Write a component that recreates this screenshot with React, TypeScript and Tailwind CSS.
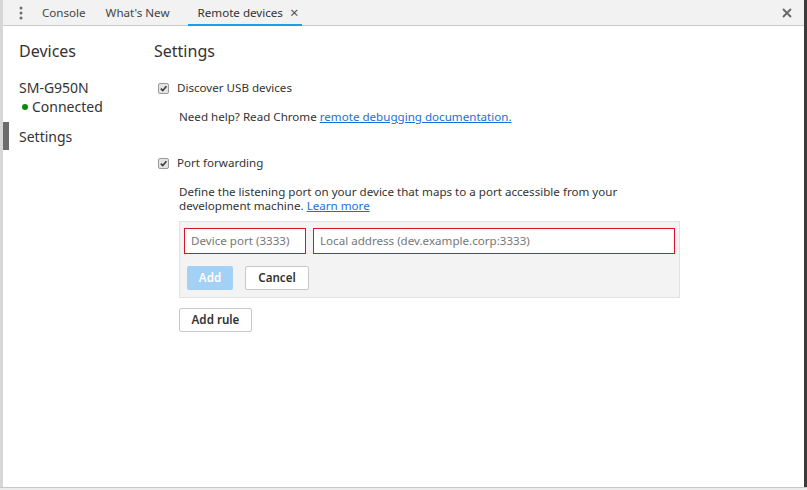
import React from 'react';

const Check: React.FC = () => (
  <span className="flex h-[11px] w-[11px] items-center justify-center rounded-[2px] border border-[#9a9a9a] bg-[#e4e4e4]">
    <svg width="9" height="9" viewBox="0 0 10 10">
      <path d="M2 5.2 L4.2 7.4 L8.2 2.4" fill="none" stroke="#3c3c3c" strokeWidth="1.8" />
    </svg>
  </span>
);

const App: React.FC = () => {
  return (
    <div
      className="flex h-[490px] w-[807px] flex-col overflow-hidden bg-white text-[#333]"
      style={{ fontFamily: '"Noto Sans", "Open Sans", sans-serif' }}
    >
      <div className="flex min-h-0 flex-1 flex-col border-l-[3px] border-r-[3px] border-l-[#d6d6d6] border-r-[#3a3a3a]">
        {/* Tab bar */}
        <div className="flex h-[26px] shrink-0 items-stretch border-b border-[#cbcbcb] bg-[#f2f2f2] text-[11.6px] text-[#444]">
          <div className="flex w-[36px] items-center justify-center">
            <svg width="4" height="14" viewBox="0 0 4 14">
              <circle cx="2" cy="2" r="1.5" fill="#6e6e6e" />
              <circle cx="2" cy="7" r="1.5" fill="#6e6e6e" />
              <circle cx="2" cy="12" r="1.5" fill="#6e6e6e" />
            </svg>
          </div>
          <div className="flex items-center px-[3px]">Console</div>
          <div className="ml-[14px] flex items-center px-[3px]">What's New</div>
          <div className="relative ml-[15px] flex w-[114px] items-center pl-[10px] text-[#333]">
            Remote devices
            <span className="ml-[7px] text-[15px] leading-none text-[#555]">×</span>
            <span className="absolute bottom-[-1px] left-0 right-0 h-[2px] bg-[#1a9ee8]" />
          </div>
          <div className="flex-1" />
          <div className="flex w-[34px] items-center justify-center">
            <svg width="10" height="10" viewBox="0 0 10 10">
              <path d="M1 1 L9 9 M9 1 L1 9" stroke="#666" strokeWidth="1.8" />
            </svg>
          </div>
        </div>

        <div className="flex min-h-0 flex-1">
          {/* Sidebar */}
          <div className="flex w-[148px] shrink-0 flex-col pt-[14px]">
            <div className="pl-[16px] text-[16px] leading-[22px] text-[#333]">Devices</div>
            <div className="mt-[17px] pl-[16px] text-[14px] leading-[18px]">SM-G950N</div>
            <div className="mt-[1px] flex items-center pl-[19px] text-[14px] leading-[18px]">
              <span className="mr-[4px] h-[6px] w-[6px] rounded-full bg-[#0a8a0a]" />
              Connected
            </div>
            <div className="mt-[6px] flex h-[28px] items-center">
              <span className="h-full w-[6px] bg-[#6b6b6b]" />
              <span className="pl-[10px] text-[14px]">Settings</span>
            </div>
          </div>

          {/* Main */}
          <div className="flex flex-1 flex-col pl-[3px] pt-[14px] text-[11.6px]">
            <div className="text-[16px] leading-[22px]">Settings</div>

            <label className="mt-[18px] flex items-center gap-[8px] pl-[4px] leading-[16px]">
              <Check />
              Discover USB devices
            </label>
            <div className="mt-[13px] pl-[25px] leading-[16px]">
              Need help? Read Chrome{' '}
              <a href="#" className="text-[#1a6fdc] underline">remote debugging documentation.</a>
            </div>

            <label className="mt-[30px] flex items-center gap-[8px] pl-[4px] leading-[16px]">
              <Check />
              Port forwarding
            </label>
            <div className="mt-[14px] w-[480px] pl-[25px] leading-[14px]">
              Define the listening port on your device that maps to a port accessible from your development machine.{' '}
              <a href="#" className="text-[#1a6fdc] underline">Learn more</a>
            </div>

            <div className="ml-[25px] mt-[8px] flex w-[501px] flex-col border border-[#e2e2e2] bg-[#f3f3f3] px-[4px] pb-[7px] pt-[6px]">
              <div className="flex gap-[7px]">
                <div className="flex h-[26px] w-[122px] items-center border border-[#e0102a] bg-white px-[6px] text-[#777]">
                  Device port (3333)
                </div>
                <div className="flex h-[26px] flex-1 items-center border border-[#e0102a] bg-white px-[6px] text-[#777]">
                  Local address (dev.example.corp:3333)
                </div>
              </div>
              <div className="mt-[12px] flex gap-[12px] pl-[3px]">
                <button className="h-[24px] w-[46px] rounded-[2px] bg-[#a3d0f5] font-semibold text-white">
                  Add
                </button>
                <button className="h-[24px] w-[64px] rounded-[2px] border border-[#c8c8c8] bg-white font-semibold text-[#333]">
                  Cancel
                </button>
              </div>
            </div>

            <div className="ml-[25px] mt-[10px] flex">
              <button className="h-[24px] w-[73px] rounded-[2px] border border-[#c8c8c8] bg-white font-semibold text-[#333]">
                Add rule
              </button>
            </div>
          </div>
        </div>
      </div>
      <div className="h-[3px] shrink-0 border-t border-[#c8c8c8] bg-[#ececec]" />
    </div>
  );
};

export default App;
